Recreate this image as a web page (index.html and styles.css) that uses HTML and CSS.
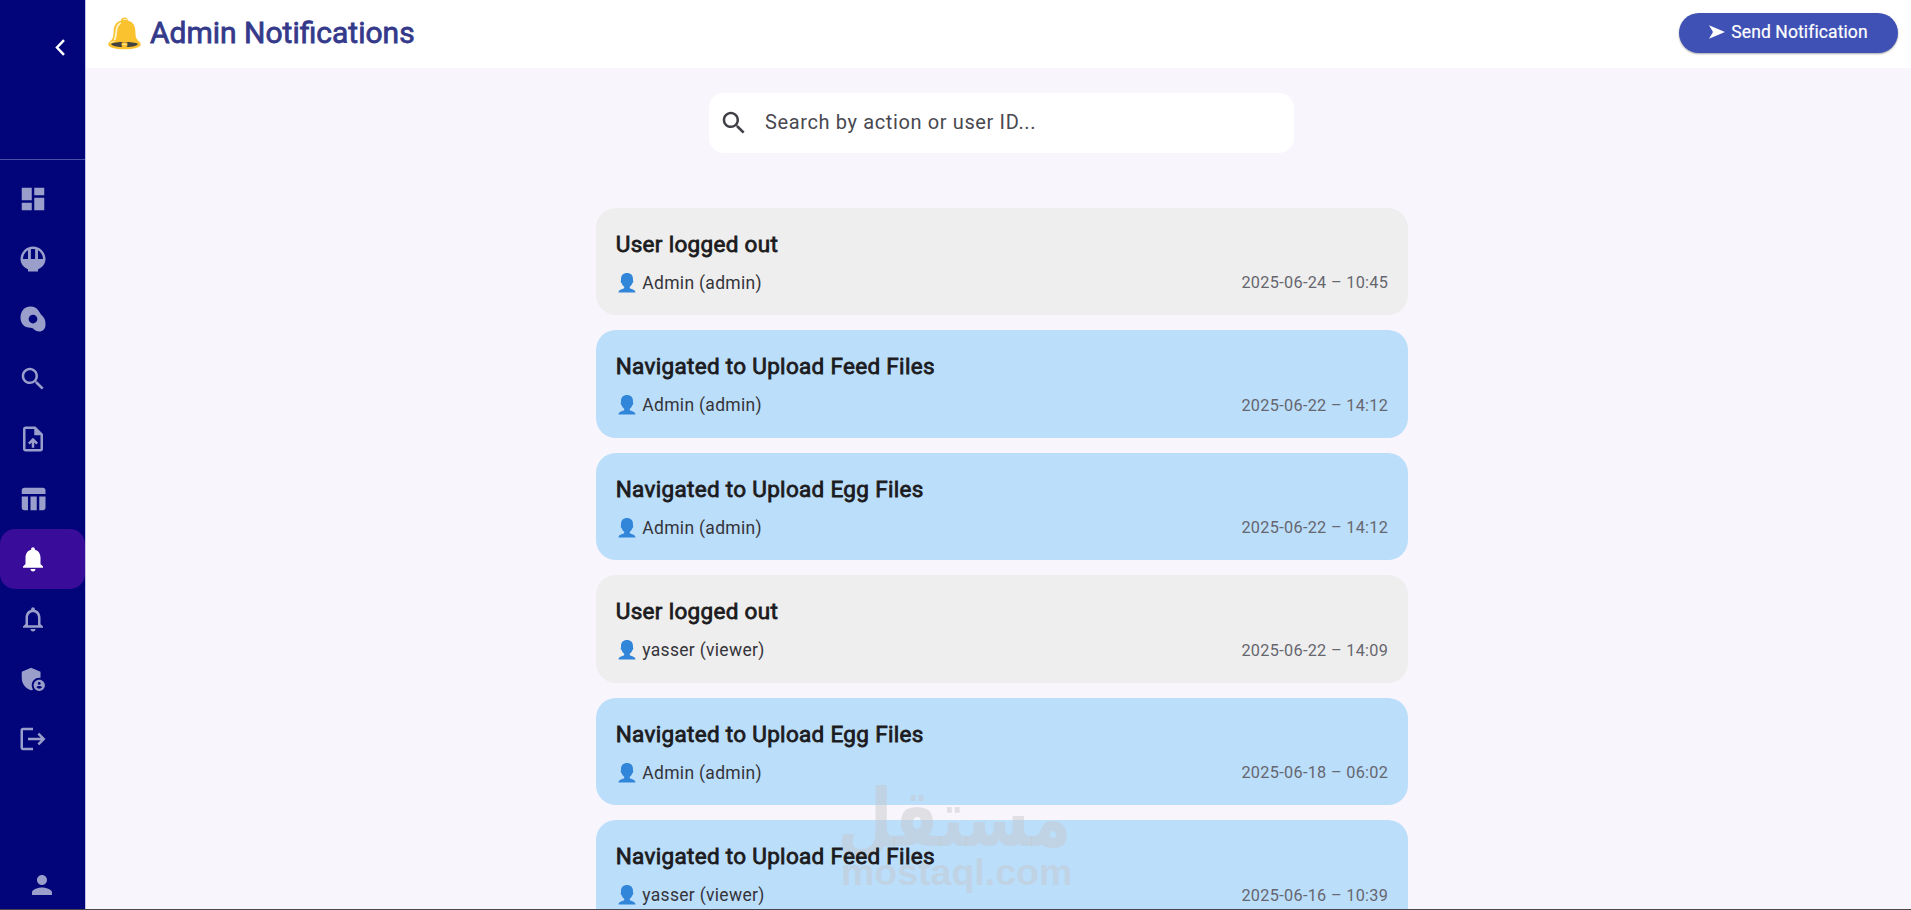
FILE: index.html
```html
<!DOCTYPE html>
<html lang="en">
<head>
    <meta charset="UTF-8">
    <meta name="viewport" content="width=device-width, initial-scale=1.0">
    <title>Admin Notifications</title>
    <link rel="stylesheet" href="styles.css">
</head>
<body>
    <svg class="sprite">
        <symbol id="user" viewBox="0 0 18 20">
            <path d="M9 0C5.300 0 3 2.300 3 6c0 1 .1 1.300-.2 1.900-.3.800.2 1.800.8 2.100.5 1.700 1.500 3 2.600 3.800v1.200C5.500 16.300.5 16.200.5 19.500h17c0-3.300-5-3.200-5.700-4.500v-1.200c1.100-.8 2.100-2.100 2.600-3.800.6-.3 1.100-1.300.8-2.100C14.900 7.300 15 7 15 6c0-3.700-2.300-6-6-6z"/>
        </symbol>
    </svg>
    <div class="app">
        <aside class="sidebar">
            <div class="sidebar-top">
                <svg class="chevron" viewBox="0 0 10 17"><path d="M9 1.200L2 8.500l7 7.300"/></svg>
            </div>
            <nav class="nav">
                <a class="nav-item"><svg viewBox="0 0 24 24"><path d="M3 13h8V3H3v10zm0 8h8v-6H3v6zm10 0h8V11h-8v10zm0-18v6h8V3h-8z"/></svg></a>
                <a class="nav-item"><svg viewBox="0 0 24 24"><path fill-rule="evenodd" d="M22 12a10 10 0 0 0-20 0c0 3.690 2.470 6.860 6 8.250V22h8v-1.750c3.530-1.390 6-4.560 6-8.250zM20 12h-4V5.080c2.390 1.390 4 3.970 4 6.920zM13.700 4.200V12h-3.400V4.200c.6-.13 1.100-.2 1.700-.2s1.100.07 1.700.2zM4 12c0-2.950 1.610-5.530 4-6.920V12H4z"/></svg></a>
                <a class="nav-item"><svg viewBox="0 0 24 24"><path fill-rule="evenodd" d="M19 9c-2-2-3.010-7-8.990-7C4.570 2 1.910 6.620 2 11.040 2.090 15.870 5 19 10 19c3 0 3 3 7 3 2.760 0 5-2.240 5-5.500C22 13 21.500 11.500 19 9zM12 15.500c-1.930 0-3.500-1.570-3.500-3.500s1.570-3.500 3.500-3.500 3.500 1.570 3.500 3.500-1.570 3.500-3.500 3.500z"/></svg></a>
                <a class="nav-item"><svg viewBox="0 0 24 24"><path d="M15.500 14h-.79l-.28-.27C15.410 12.590 16 11.110 16 9.500 16 5.910 13.090 3 9.500 3S3 5.910 3 9.500 5.910 16 9.500 16c1.610 0 3.090-.59 4.230-1.570l.27.28v.79l5 4.990L20.490 19l-4.990-5zm-6 0C7.010 14 5 11.990 5 9.500S7.010 5 9.500 5 14 7.010 14 9.500 11.990 14 9.500 14z"/></svg></a>
                <a class="nav-item"><svg viewBox="0 0 24 24"><path d="M14 2H6c-1.100 0-1.990.9-1.990 2L4 20c0 1.100.89 2 1.990 2H18c1.100 0 2-.9 2-2V8l-6-6zm4 18H6V4h7v5h5v11zM8 15.010l1.410 1.410L11 14.840V19h2v-4.160l1.590 1.590L16 15.010 12.010 11z"/></svg></a>
                <a class="nav-item"><svg viewBox="0 0 24 24"><path d="M10 10.020h5V21h-5V10.020zM17 21h3c1.100 0 2-.9 2-2v-9h-5v11zm3-18H5c-1.100 0-2 .9-2 2v3h19V5c0-1.100-.9-2-2-2zM3 19c0 1.100.9 2 2 2h3V10H3v9z"/></svg></a>
                <a class="nav-item active"><svg viewBox="0 0 24 24"><path d="M12 22c1.100 0 2-.9 2-2h-4c0 1.100.89 2 2 2zm6-6v-5c0-3.070-1.640-5.640-4.500-6.320V4c0-.83-.67-1.500-1.500-1.500s-1.500.67-1.500 1.500v.68C7.630 5.360 6 7.920 6 11v5l-2 2v1h16v-1l-2-2z"/></svg></a>
                <a class="nav-item"><svg viewBox="0 0 24 24"><path d="M12 22c1.100 0 2-.9 2-2h-4c0 1.100.89 2 2 2zm6-6v-5c0-3.070-1.640-5.640-4.500-6.320V4c0-.83-.67-1.500-1.500-1.500s-1.500.67-1.500 1.500v.68C7.630 5.360 6 7.920 6 11v5l-2 2v1h16v-1l-2-2zm-2 1H8v-6c0-2.480 1.510-4.500 4-4.500s4 2.020 4 4.500v6z"/></svg></a>
                <a class="nav-item"><svg viewBox="0 0 24 24"><path d="M17 11c.34 0 .67.04 1 .09V6.270L10.500 3 3 6.270v4.910c0 4.540 3.200 8.790 7.500 9.820.55-.13 1.080-.32 1.600-.55-.69-.98-1.100-2.170-1.100-3.450 0-3.310 2.690-6 6-6z"/><path fill-rule="evenodd" d="M17 12.500c-2.480 0-4.500 2.020-4.500 4.500s2.020 4.500 4.500 4.500 4.500-2.020 4.500-4.500-2.020-4.500-4.500-4.500zm0 1.880c.62 0 1.120.51 1.120 1.120s-.51 1.120-1.120 1.120-1.120-.51-1.120-1.120.5-1.120 1.120-1.120zm0 5.370c-.93 0-1.740-.46-2.240-1.170.05-.72 1.510-1.080 2.240-1.080s2.190.36 2.240 1.080c-.5.71-1.310 1.170-2.240 1.170z"/></svg></a>
                <a class="nav-item"><svg viewBox="0 0 24 24"><path d="M17 7l-1.410 1.410L18.170 11H8v2h10.170l-2.580 2.580L17 17l5-5zM4 5h8V3H4c-1.100 0-2 .9-2 2v14c0 1.100.9 2 2 2h8v-2H4V5z"/></svg></a>
            </nav>
            <div class="profile">
                <svg viewBox="0 0 24 24"><path d="M12 12c2.210 0 4-1.790 4-4s-1.790-4-4-4-4 1.790-4 4 1.790 4 4 4zm0 2c-2.670 0-8 1.340-8 4v2h16v-2c0-2.660-5.330-4-8-4z"/></svg>
            </div>
        </aside>

        <main class="main">
            <header class="header">
                <svg class="bell" viewBox="0 0 34 34">
                    <path fill="#f9c22e" d="M17 .5c-2 0-3.400 1.200-3.500 3C8 5 5.800 9.500 5.800 14.500c0 6.500-1 8.500-3.800 10.800C.8 26.300.2 27.300.3 28.500c.2 2.500 6.700 4.800 16.700 4.800s16.500-2.300 16.700-4.800c.1-1.200-.5-2.200-1.700-3.200-2.800-2.300-3.800-4.300-3.800-10.800 0-5-2.200-9.500-7.700-11C20.400 1.700 19 .5 17 .5z"/>
                    <path fill="#424242" d="M3 27.700c2-1.200 8-1.900 14-1.900s12 .7 14 1.900c-1.500 2.200-8 3.300-14 3.300S4.500 29.900 3 27.700z"/>
                    <path fill="#f9c22e" d="M14 26.500c1-.8 5-.8 6 0v2.800c0 2.600-6 2.600-6 0z"/>
                    <path class="bell-shine" d="M12.500 6.500C9 9 8.500 12.500 8.400 16c-.1 3-.5 5-1.400 7"/>
                    <path class="bell-shine thin" d="M16 2.600h3M2.500 26.500l4-1.500M15.500 28h3"/>
                </svg>
                <h1>Admin Notifications</h1>
                <button class="send-button">
                    <svg viewBox="0 0 16 14"><path d="M0 .3L16 7 0 13.700 4 7z"/></svg>
                    <span>Send Notification</span>
                </button>
            </header>

            <section class="content">
                <div class="search">
                    <svg viewBox="0 0 24 24"><path d="M15.500 14h-.79l-.28-.27C15.410 12.590 16 11.110 16 9.500 16 5.910 13.090 3 9.500 3S3 5.910 3 9.500 5.910 16 9.500 16c1.610 0 3.090-.59 4.230-1.570l.27.28v.79l5 4.990L20.490 19l-4.990-5zm-6 0C7.010 14 5 11.990 5 9.500S7.010 5 9.500 5 14 7.010 14 9.500 11.990 14 9.500 14z"/></svg>
                    <span>Search by action or user ID...</span>
                </div>

                <div class="list">
                    <div class="card read">
                        <h2>User logged out</h2>
                        <div class="card-row">
                            <span class="user"><svg><use href="#user"/></svg>Admin (admin)</span>
                            <span class="date">2025-06-24 – 10:45</span>
                        </div>
                    </div>
                    <div class="card">
                        <h2>Navigated to Upload Feed Files</h2>
                        <div class="card-row">
                            <span class="user"><svg><use href="#user"/></svg>Admin (admin)</span>
                            <span class="date">2025-06-22 – 14:12</span>
                        </div>
                    </div>
                    <div class="card">
                        <h2>Navigated to Upload Egg Files</h2>
                        <div class="card-row">
                            <span class="user"><svg><use href="#user"/></svg>Admin (admin)</span>
                            <span class="date">2025-06-22 – 14:12</span>
                        </div>
                    </div>
                    <div class="card read">
                        <h2>User logged out</h2>
                        <div class="card-row">
                            <span class="user"><svg><use href="#user"/></svg>yasser (viewer)</span>
                            <span class="date">2025-06-22 – 14:09</span>
                        </div>
                    </div>
                    <div class="card">
                        <h2>Navigated to Upload Egg Files</h2>
                        <div class="card-row">
                            <span class="user"><svg><use href="#user"/></svg>Admin (admin)</span>
                            <span class="date">2025-06-18 – 06:02</span>
                        </div>
                    </div>
                    <div class="card">
                        <h2>Navigated to Upload Feed Files</h2>
                        <div class="card-row">
                            <span class="user"><svg><use href="#user"/></svg>yasser (viewer)</span>
                            <span class="date">2025-06-16 – 10:39</span>
                        </div>
                    </div>
                </div>
            </section>
        </main>
    </div>

    <div class="watermark">
        <div class="watermark-ar" lang="ar" dir="rtl">مستقل</div>
        <div class="watermark-en">mostaql.com</div>
    </div>
</body>
</html>
```

FILE: styles.css
```css
* {
    box-sizing: border-box;
}

body {
    margin: 0;
    height: 100vh;
    overflow: hidden;
    font-family: Roboto, sans-serif;
    background: #f8f5fc;
    color: #1c1b20;
}

.sprite {
    display: none;
}

.app {
    display: flex;
    height: 100vh;
    border-bottom: 1px solid #48474b;
    overflow: hidden;
}

/* Sidebar */
.sidebar {
    display: flex;
    flex-direction: column;
    flex: none;
    width: 86px;
    background: #02047a;
    border-right: 1px solid #c5c2e3;
}

.sidebar-top {
    height: 160px;
    margin-bottom: 9px;
    padding: 39px 20px 0;
    text-align: right;
    border-bottom: 1px solid #4a51a3;
}

.chevron {
    width: 10px;
    height: 17px;
    fill: none;
    stroke: #fff;
    stroke-width: 2.500;
}

.nav-item {
    display: flex;
    align-items: center;
    height: 60px;
    padding-left: 18px;
    border-radius: 15px;
    fill: #999fca;
}

.nav-item.active {
    background: #390d99;
    fill: #fff;
}

.nav-item svg,
.profile svg {
    width: 30px;
    height: 30px;
}

.profile {
    margin-top: auto;
    padding: 0 0 5px 27px;
    fill: #999fca;
}

/* Header */
.main {
    flex: 1;
    min-width: 0;
}

.header {
    display: flex;
    align-items: center;
    height: 68px;
    padding: 0 13px 2px 22px;
    background: #fff;
}

.bell {
    width: 33px;
    height: 33px;
    margin-right: 9px;
}

.bell-shine {
    fill: none;
    stroke: #fff3c4;
    stroke-width: 2;
    stroke-linecap: round;
}

.bell-shine.thin {
    stroke-width: 1;
}

h1 {
    margin: 0 0 2px;
    font-size: 30px;
    font-weight: 400;
    color: #34398a;
    -webkit-text-stroke: 0.8px #34398a;
}

.send-button {
    display: flex;
    align-items: center;
    justify-content: center;
    gap: 6px;
    width: 219px;
    height: 40px;
    margin-left: auto;
    padding: 0 0 2px;
    border: none;
    border-radius: 20px;
    background: #3f51b5;
    box-shadow: 0 1px 2px rgba(0, 0, 0, 0.35);
    color: #fff;
    font-family: inherit;
    font-size: 17.500px;
    font-weight: 400;
    letter-spacing: 0.100px;
    -webkit-text-stroke: 0.2px #fff;
    fill: #fff;
}

.send-button svg {
    width: 16px;
    height: 14px;
}

/* Search */
.content {
    display: flex;
    flex-direction: column;
    align-items: center;
    padding: 25px 0 0 6px;
}

.search {
    display: flex;
    align-items: center;
    gap: 16px;
    width: 585px;
    height: 60px;
    margin-bottom: 54.800px;
    padding: 0 10px 1px;
    border-radius: 15px;
    background: #fff;
    color: #49484f;
    font-size: 20px;
    letter-spacing: 0.625px;
}

.search span {
    padding-bottom: 1px;
}

.search svg {
    width: 30px;
    height: 30px;
    fill: #3f3f46;
}

/* Notifications */
.list {
    display: flex;
    flex-direction: column;
    gap: 15px;
    width: 812.500px;
    margin-left: 1px;
}

.card {
    flex: none;
    height: 107.500px;
    padding: 21px 20px 0;
    border-radius: 20px;
    background: #bbdefb;
}

.card.read {
    background: #eee;
}

h2 {
    position: relative;
    z-index: 2;
    margin: 0 0 10px;
    font-size: 22.500px;
    line-height: 30px;
    font-weight: 400;
    letter-spacing: 0.310px;
    -webkit-text-stroke: 0.8px #1c1b20;
}

.card-row {
    display: flex;
    align-items: center;
    justify-content: space-between;
    height: 28px;
}

.user {
    display: flex;
    align-items: center;
    color: #35343a;
    font-size: 17.500px;
    letter-spacing: 0.310px;
}

.user svg {
    width: 18px;
    height: 20px;
    margin: 0 6.500px 0 2px;
    fill: #3286d9;
}

.date {
    color: #66666f;
    font-size: 16.250px;
    letter-spacing: 0.310px;
}

/* Watermark over the list */
.watermark {
    position: absolute;
    left: 841px;
    top: 776px;
    width: 230px;
    z-index: 1;
    color: rgba(197, 199, 203, 0.48);
    font-weight: bold;
    pointer-events: none;
}

.watermark-ar {
    height: 73px;
    font-family: "DejaVu Sans", sans-serif;
    font-size: 80px;
    line-height: 86px;
    white-space: nowrap;
    transform: scaleX(0.8);
    transform-origin: right;
}

.watermark-en {
    font-family: "Liberation Sans", sans-serif;
    font-size: 37.500px;
    line-height: 46px;
}
```
